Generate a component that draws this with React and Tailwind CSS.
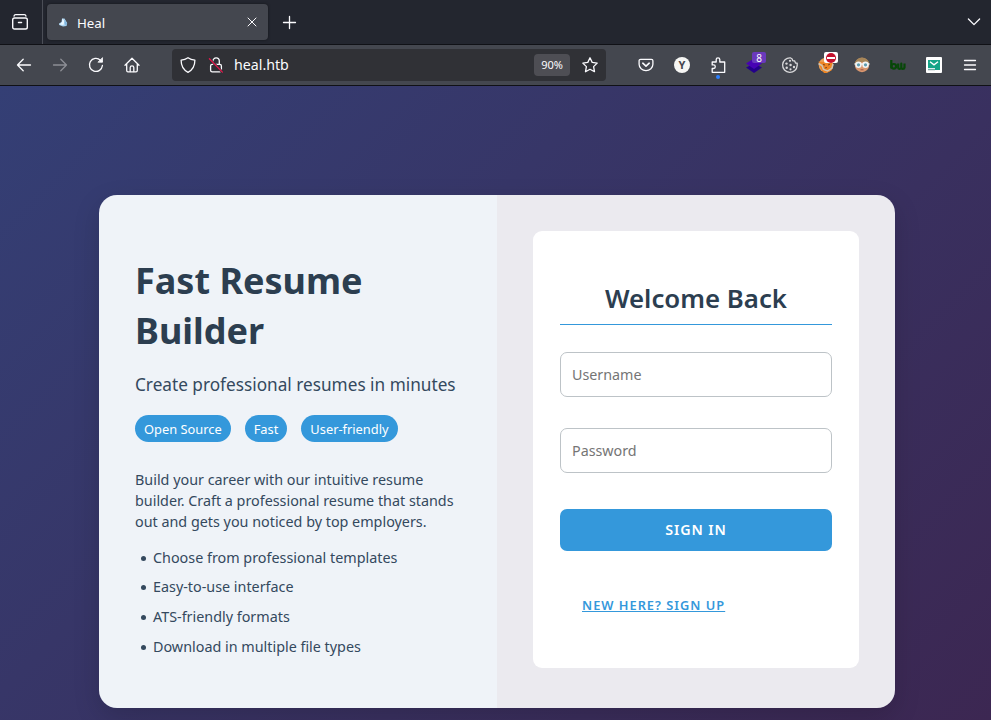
import React from "react";

const stroke = { fill: "none", stroke: "currentColor", strokeWidth: 1.3, strokeLinecap: "round", strokeLinejoin: "round" };

function Icon({ children, className = "" }) {
  return (
    <svg viewBox="0 0 16 16" className={`block size-4 shrink-0 overflow-visible ${className}`} {...stroke}>
      {children}
    </svg>
  );
}

function TabBar() {
  return (
    <div className="flex h-11 items-center bg-[#23262f]">
      <div className="flex h-full w-[43px] items-center justify-center border-r border-[#4b4e57] pr-[3px]">
        <Icon>
          <path d="M2 2.200Q2.200.700 3.700.700h8.600q1.500 0 1.700 1.500" />
          <rect x=".7" y="4" width="14.600" height="11" rx="1.800" strokeWidth="1.400" />
          <path d="M6.500 8.500h3" strokeWidth="1.500" />
        </Icon>
      </div>
      <div className="ml-1 flex h-9 w-[221px] items-center rounded bg-[#44474f] pl-2 pr-[10px] shadow-[0_0_3px_rgba(0,0,0,0.45)]">
        <svg viewBox="0 0 16 16" className="block size-4 shrink-0">
          <path d="M7 4.500 9.500 4.500 12.200 9 11.500 12 8 12.500 4.200 11 4 9.500 6.500 8z" fill="#a9d3ef" />
          <path d="M7.400 4.500 9.500 7 8.500 11 4.500 10.500 7 8z" fill="#e8f6ff" />
          <path d="M9.500 5.500 12 9.500 11 12 9.500 9z" fill="#7fb4de" />
        </svg>
        <span className="ml-[6px] mt-[2px] flex-1 text-[13.300px] leading-5 text-[#fbfbfe]">Heal</span>
        <svg viewBox="0 0 12 12" className="block size-3 shrink-0" {...stroke} strokeWidth="1">
          <path d="m2 2 8 8m0-8-8 8" />
        </svg>
      </div>
      <Icon className="ml-[13px]">
        <path d="M8.500 2.500v12M2.500 8.500h12" />
      </Icon>
      <Icon className="ml-auto mr-[9px]">
        <path d="m2.400 5 5.600 5.600L13.600 5" />
      </Icon>
    </div>
  );
}

function AddressBar() {
  return (
    <div className="flex h-8 w-[434px] items-center rounded bg-[#303136] pl-2 pr-2">
      <Icon>
        <path d="M8 .7C6.200 2 3.500 2.900 1.100 3.100c0 5.100 1.200 9.500 6.900 12.200 5.700-2.700 6.900-7.100 6.900-12.200C12.500 2.900 9.800 2 8 .7z" />
      </Icon>
      <Icon className="ml-3">
        <rect x="2.600" y="7.300" width="10.800" height="7.600" rx="1.600" />
        <path d="M4.900 7V4.100a3.200 3.200 0 0 1 6.400 0V7" />
        <path d="m1.400 1.800 13 13.300" stroke="#303136" strokeWidth="2.500" />
        <path d="m1.400 1.800 13 13.300" stroke="#e2194b" />
      </Icon>
      <span className="-mt-px ml-[10px] flex-1 text-[14.200px] leading-5 text-[#fbfbfe]">heal.htb</span>
      <span className="flex h-[22px] w-9 items-center justify-center rounded-sm bg-[#4e4e54] text-[11px] text-[#fbfbfe]">90%</span>
      <Icon className="ml-3">
        <path d="m8 .8 2.200 4.600 5 .7-3.600 3.500.9 5.100L8 12.300l-4.500 2.400.9-5.100L.8 6.100l5-.7z" />
      </Icon>
    </div>
  );
}

function Extensions() {
  return (
    <div className="ml-auto mr-[13px] flex items-center gap-5">
      <Icon>
        <path d="M2.600 2.300h10.800a1.500 1.500 0 0 1 1.500 1.500v3.400a6.900 6.400 0 0 1-13.800 0V3.800a1.500 1.500 0 0 1 1.500-1.500z" />
        <path d="m4.800 6.200 3.200 3 3.200-3" strokeWidth="1.600" />
      </Icon>
      <div className="flex size-4 items-center justify-center rounded-full bg-[#f6f6f4] pb-px text-[11px] font-bold leading-none text-[#44474f]">Y</div>
      <div className="relative">
        <Icon>
          <path d="M2.200 15.300v-3.800h1.300a1.800 1.800 0 0 0 0-3.600H2.200V5h4V2.600a1.800 1.800 0 0 1 3.600 0V5h4.900v10.300z" />
        </Icon>
        <span className="absolute -bottom-[6px] left-[6px] size-1 rounded-full bg-[#2a7fff]" />
      </div>
      <div className="relative">
        <svg viewBox="0 0 16 16" className="block size-4 overflow-visible">
          <path d="m0 10.500 8-4 8 4-8 5.500z" fill="#24008a" />
          <path d="m0 6.500 8-5 8 5-8 5.500z" fill="#4702b4" />
        </svg>
        <span className="absolute -top-[5px] left-[6px] flex h-[11px] w-[14px] items-center justify-center rounded-[2px] bg-[#6a39bd] text-[10px] leading-none text-white">8</span>
      </div>
      <Icon className="text-[#d8d8da]">
        <path d="M8.300.800a7.300 7.300 0 1 0 6.900 7.600V6.200l-1.700-.2-.8-2-2-.3-.5-1.700z" />
        <g fill="currentColor" stroke="none">
          <circle cx="8" cy="3.800" r="1.100" />
          <circle cx="4.500" cy="6.600" r="1.200" />
          <circle cx="4.700" cy="10.700" r="1.200" />
          <circle cx="8.600" cy="8" r="1.200" />
          <circle cx="8.500" cy="12.300" r="1.100" />
          <circle cx="12" cy="10" r="1.200" />
        </g>
      </Icon>
      <div className="relative">
        <svg viewBox="0 0 16 16" className="block size-4 overflow-visible">
          <circle cx="8" cy="8" r="7.300" fill="#eba057" />
          <path d="M.500 4.500 5 5l5-2 5 4-1 6-5 3H6l-3-4z" fill="#ed8424" />
          <path d="M.500 6.500 4 8.500l1.500 4 4 1.500 4.500-3 1-4" fill="none" stroke="#cfc6b7" strokeWidth="1.500" />
          <path d="m5 7.500 2 .5m3 0 2-.8M7 11l2-.5" stroke="#7c421d" fill="none" />
        </svg>
        <span className="absolute -top-[5px] left-[6px] flex h-[11px] w-[14px] items-center justify-center rounded-[2px] bg-white">
          <span className="flex size-[10px] items-center justify-center rounded-full bg-[#c4122e]">
            <span className="h-[2px] w-2 bg-white" />
          </span>
        </span>
      </div>
      <svg viewBox="0 0 16 16" className="block size-4">
        <circle cx="8" cy="8" r="7.200" fill="#d9976f" />
        <path d="M.8 7a7.200 6.500 0 0 1 14.400 0L11 5H5z" fill="#a78659" />
        <path d="M.5 7h15" stroke="#eee" strokeWidth="1.500" />
        <circle cx="4.500" cy="7.800" r="2.400" fill="#5d9bb0" stroke="#f1f4f4" strokeWidth="1.600" />
        <circle cx="11.500" cy="7.800" r="2.400" fill="#5d9bb0" stroke="#f1f4f4" strokeWidth="1.600" />
        <path d="M6.500 12.800h3" stroke="#9d5548" />
      </svg>
      <svg viewBox="0 0 16 16" className="block size-4" fill="none" stroke="#074708" strokeWidth="2.200" strokeLinejoin="round">
        <path d="M1.300 3v8.500" />
        <circle cx="3.800" cy="9.300" r="2.300" />
        <path d="M8.200 6.500v4q0 1.300 1.500 1.300t1.600-1.300v-4 4q0 1.300 1.500 1.300t1.700-1.300v-4" />
      </svg>
      <svg viewBox="0 0 16 16" className="block size-4">
        <rect width="16" height="16" rx="1" fill="#fff" />
        <path d="M2 3h12v10H2z" fill="#14a487" />
        <path d="m4 4.800 4 3 4-3" fill="none" stroke="#fff" strokeWidth="1.400" />
        <path d="M2 11.500h7" stroke="#d5eeee" />
        <path d="M2 12.800h7" stroke="#9aaeb1" />
      </svg>
      <Icon>
        <path d="M2.500 3.500h11M2.500 8h11M2.500 12.500h11" />
      </Icon>
    </div>
  );
}

function Toolbar() {
  return (
    <div className="flex h-[42px] items-center border-y border-[#101116] bg-[#44474f] pl-4">
      <div className="flex w-[156px] items-center gap-5">
        <Icon>
          <path d="M14.500 8H1.500m5.700-5.800L1.500 8l5.700 5.800" />
        </Icon>
        <Icon className="opacity-40">
          <path d="M1.500 8h13M8.800 2.200 14.500 8l-5.700 5.800" />
        </Icon>
        <Icon>
          <path d="M14.400 8.500A6.500 6.500 0 1 1 12.400 3.200l1.400 1.300" />
          <path d="M14.500 1v4.200h-4.200z" fill="currentColor" strokeWidth=".8" />
        </Icon>
        <Icon>
          <path d="M1 8.200 8 1.300l7 6.900M2.700 7v6.500a1.300 1.300 0 0 0 1.300 1.300h8a1.300 1.300 0 0 0 1.300-1.300V7" />
          <path d="M6.200 14.600v-4a1.800 1.800 0 0 1 3.600 0v4" />
        </Icon>
      </div>
      <AddressBar />
      <Extensions />
    </div>
  );
}

const tags = ["Open Source", "Fast", "User-friendly"];
const features = [
  "Choose from professional templates",
  "Easy-to-use interface",
  "ATS-friendly formats",
  "Download in multiple file types",
];

function Intro() {
  return (
    <section className="w-1/2 bg-[#eff3f8] px-9 pt-[61px] text-[#34495e]">
      <h1 className="text-[36px] font-bold leading-[50px] text-[#2c3e50]">
        Fast Resume
        <br />
        Builder
      </h1>
      <p className="mt-4 whitespace-nowrap text-[17.220px] leading-[25px]">Create professional resumes in minutes</p>
      <div className="mt-[18px] flex gap-[14px]">
        {tags.map((tag) => (
          <span key={tag} className="flex h-[27px] items-center rounded-full bg-[#3498db] px-[9px] pt-[2px] text-[12.850px] text-white">
            {tag}
          </span>
        ))}
      </div>
      <p className="mt-[27px] whitespace-nowrap text-[14.350px] leading-[21px]">
        Build your career with our intuitive resume
        <br />
        builder. Craft a professional resume that stands
        <br />
        out and gets you noticed by top employers.
      </p>
      <ul className="mt-[14.600px] flex flex-col gap-[8.750px] text-[14.350px] leading-[21px]">
        {features.map((feature) => (
          <li key={feature} className="flex items-center">
            <span className="ml-[6px] mr-[7px] mt-[2px] size-[5px] rounded-full bg-[#34495e]" />
            {feature}
          </li>
        ))}
      </ul>
    </section>
  );
}

function SignIn() {
  const field =
    "block h-[45px] w-full rounded-[7px] border border-[#bdc3c7] bg-white px-[11px] text-[14.300px] outline-none placeholder:text-[#757575]";
  return (
    <section className="w-1/2 bg-[#ebeaef] px-9 pt-9">
      <form className="h-[437px] rounded-[9px] bg-white px-[27px] pt-[47px]">
        <h2 className="h-[47px] border-b border-[#3498db] text-center text-[25.800px] font-semibold leading-[41px] text-[#2c3e50]">Welcome Back</h2>
        <input className={`mt-[27px] ${field}`} placeholder="Username" />
        <input className={`mt-[31px] ${field}`} type="password" placeholder="Password" />
        <button type="button" className="mt-9 block h-[42px] w-full rounded-[7px] bg-[#3498db] text-[14.300px] font-semibold tracking-[0.900px] text-white">
          SIGN IN
        </button>
        <a className="ml-[22px] mt-[44px] inline-block text-[12.800px] font-semibold leading-5 tracking-[1px] text-[#3498db] underline">
          NEW HERE? SIGN UP
        </a>
      </form>
    </section>
  );
}

export default function App() {
  return (
    <div className="flex h-[720px] w-[991px] flex-col overflow-hidden font-['Noto_Sans',sans-serif] text-[#fbfbfe]">
      <TabBar />
      <Toolbar />
      <main className="flex flex-1 justify-center bg-linear-135/srgb from-[#343f75] to-[#3c2752] pl-[3px] pt-[109px]">
        <div className="flex h-[513px] w-[796px] overflow-hidden rounded-[18px] shadow-[0_9px_27px_rgba(0,0,0,0.15)]">
          <Intro />
          <SignIn />
        </div>
      </main>
    </div>
  );
}
